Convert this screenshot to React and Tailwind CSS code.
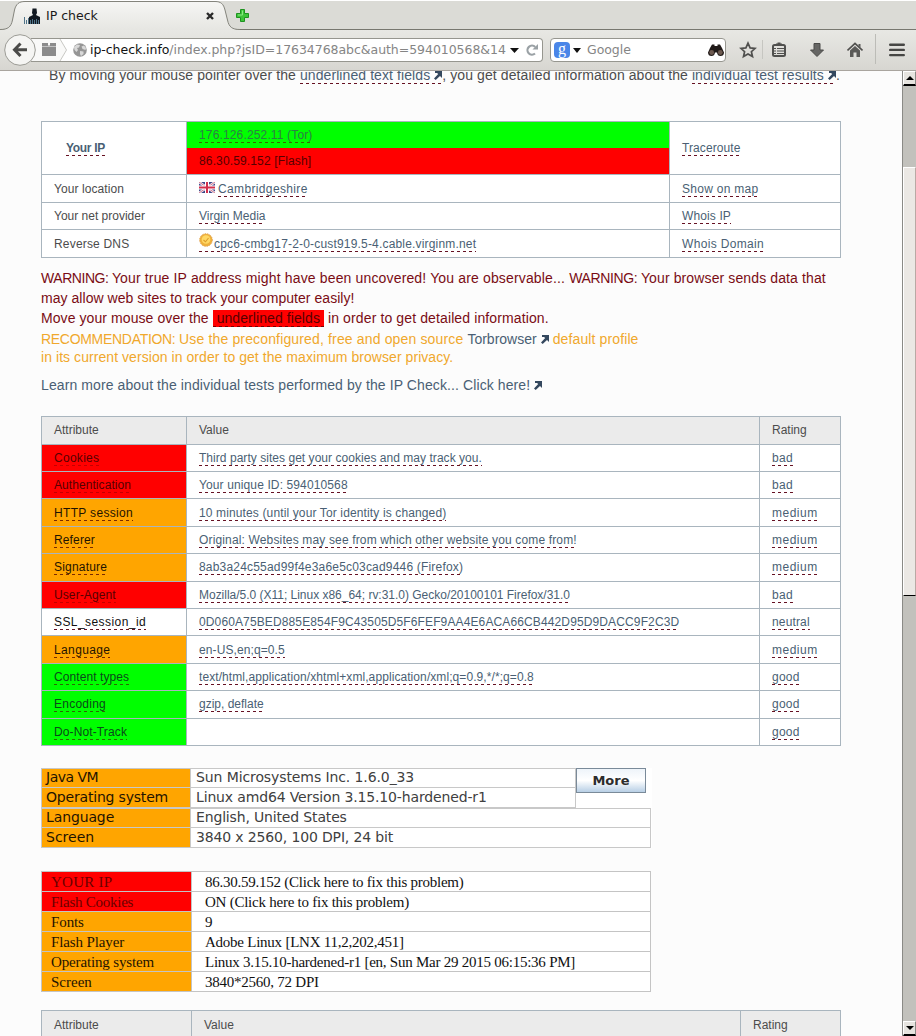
import React from "react";

const tones = {
  red: { cell: "bg-[#ff0000]", text: "text-[#560000] [--u:#c40000]" },
  orange: { cell: "bg-[#ffa500]", text: "text-[#1f1400] [--u:#7a2a00]" },
  green: { cell: "bg-[#00ff00]", text: "text-[#0a4a1a] [--u:#2a6a00]" },
  white: { cell: "bg-white", text: "text-[#111111] [--u:#661122]" },
};

const link = "text-[#4a5f74] [--u:#661122]";
const dashes =
  "bg-[repeating-linear-gradient(90deg,var(--u)_0_3px,transparent_3px_6px)] bg-[length:100%_1px] bg-bottom bg-no-repeat";

function U({ className = "", tone = link, lead = "leading-[14px]", children }) {
  return (
    <span className={`inline-block whitespace-nowrap pb-px ${dashes} ${lead} ${tone} ${className}`}>
      {children}
    </span>
  );
}

function Ext({ className = "" }) {
  return (
    <svg className={`inline-block align-baseline ${className}`} width="8" height="9" viewBox="0 0 8 9">
      <path d="M1 0H8V7L6 5L1.700 9L0 7.500L4.200 3L3 2H1Z" fill="#34485e" />
    </svg>
  );
}

const rows = [
  { a: "Cookies", at: "tracking-[0.28px]", v: "Third party sites get your cookies and may track you.", vt: "tracking-[0.04px]", r: "bad", t: "red", h: "h-[27px] pt-[6px]" },
  { a: "Authentication", at: "tracking-[0.07px]", v: "Your unique ID: 594010568", vt: "tracking-[0.12px]", r: "bad", t: "red", h: "h-[27px] pt-[6px]" },
  { a: "HTTP session", at: "tracking-[0.33px]", v: "10 minutes (until your Tor identity is changed)", vt: "tracking-[0.13px]", r: "medium", t: "orange", h: "h-[28px] pt-[7px]" },
  { a: "Referer", at: "tracking-[0.14px]", v: "Original: Websites may see from which other website you come from!", vt: "tracking-[0.15px]", r: "medium", t: "orange", h: "h-[27px] pt-[6px]" },
  { a: "Signature", at: "tracking-[0.2px]", v: "8ab3a24c55ad99f4e3a6e5c03cad9446 (Firefox)", vt: "tracking-[0.19px]", r: "medium", t: "orange", h: "h-[28px] pt-[6px]" },
  { a: "User-Agent", at: "tracking-[0.1px]", v: "Mozilla/5.0 (X11; Linux x86_64; rv:31.0) Gecko/20100101 Firefox/31.0", vt: "tracking-[-0.015px]", r: "bad", t: "red", h: "h-[27px] pt-[6px]" },
  { a: "SSL_session_id", at: "tracking-[0.43px]", v: "0D060A75BED885E854F9C43505D5F6FEF9AA4E6ACA66CB442D95D9DACC9F2C3D", vt: "tracking-[0.125px]", r: "neutral", t: "white", h: "h-[27px] pt-[6px]" },
  { a: "Language", at: "tracking-[0.37px]", v: "en-US,en;q=0.5", vt: "tracking-[0.1px]", r: "medium", t: "orange", h: "h-[28px] pt-[7px]" },
  { a: "Content types", at: "tracking-[0.08px]", v: "text/html,application/xhtml+xml,application/xml;q=0.9,*/*;q=0.8", vt: "tracking-[0.08px]", r: "good", t: "green", h: "h-[27px] pt-[6px]" },
  { a: "Encoding", at: "tracking-[0.25px]", v: "gzip, deflate", vt: "", r: "good", t: "green", h: "h-[28px] pt-[6px]" },
  { a: "Do-Not-Track", at: "tracking-[0.12px]", v: "", vt: "", r: "good", t: "green", h: "h-[27px] pt-[6px]" },
];

const ratingTracking = {
  bad: "tracking-[0.3px]",
  medium: "tracking-[0.5px]",
  neutral: "tracking-[0.15px]",
  good: "tracking-[0.25px]",
};

const alarm = "bg-[#ff0000] text-[#6a0000]";
const caution = "bg-[#ffa500] text-[#1f1400]";
const flash = [
  ["YOUR IP", "86.30.59.152 (Click here to fix this problem)", `${alarm} tracking-[0.25px]`],
  ["Flash Cookies", "ON (Click here to fix this problem)", `${alarm} tracking-[-0.25px]`],
  ["Fonts", "9", `${caution} tracking-[-0.1px]`],
  ["Flash Player", "Adobe Linux [LNX 11,2,202,451]", `${caution} tracking-[-0.12px]`],
  ["Operating system", "Linux 3.15.10-hardened-r1 [en, Sun Mar 29 2015 06:15:36 PM]", `${caution} tracking-[-0.15px]`],
  ["Screen", "3840*2560, 72 DPI", caution],
];

function TabStrip() {
  return (
    <div className="relative h-[30px] border-b border-[#77776f] border-t border-t-white bg-[#dbdbd6]">
      <svg className="absolute left-0 -top-px" width="240" height="30" viewBox="0 0 240 30">
        <defs>
          <linearGradient id="tab" x1="0" y1="0" x2="0" y2="1">
            <stop offset="0" stopColor="#f6f6f4" />
            <stop offset="1" stopColor="#e6e6e2" />
          </linearGradient>
        </defs>
        <path d="M0 29.5C8 29.5 11 27 12.500 20L14.500 10C16 4 19 1.500 25 1.500H215C221 1.500 223.500 4 225 10L227.500 20C229 27 232 29.500 240 29.500V30H0Z" fill="url(#tab)" />
        <path d="M0 29.5C8 29.5 11 27 12.500 20L14.500 10C16 4 19 1.500 25 1.500H215C221 1.500 223.500 4 225 10L227.500 20C229 27 232 29.500 240 29.500" fill="none" stroke="#84847c" />
      </svg>
      <div className="relative flex h-[29px] items-center pl-6">
        <svg width="16" height="16" viewBox="0 0 16 16">
          <path d="M8.500 0.500H12.500L13 5L12 7L16 9V16H5V9L9 7L8 5Z" fill="#111820" />
          <path d="M0.500 9V16M2.500 12V16M4.500 10V16M6.500 12V16M8.500 11V16M10.500 12V16M12.500 11V16M14.500 12V16" stroke="#4f7388" />
        </svg>
        <span className="ml-1.5 w-[160px] text-[12.5px] leading-4 text-[#1a1a1a]">IP check</span>
        <svg width="8" height="8" viewBox="0 0 8 8">
          <path d="M1 1L7 7M7 1L1 7" stroke="#2a2a2a" strokeWidth="2.400" />
        </svg>
        <svg className="ml-[21px]" width="15" height="15" viewBox="0 0 15 15">
          <path d="M5.500 1.500H9.500V5.500H13.500V9.500H9.500V13.500H5.500V9.500H1.500V5.500H5.500Z" fill="#3fc43a" stroke="#1e9320" strokeLinejoin="round" />
          <path d="M7.500 2.500V7H3" stroke="#8be884" fill="none" />
        </svg>
      </div>
    </div>
  );
}

function NavBar() {
  return (
    <div className="flex h-[41px] items-start border-b border-[#a9a59f] bg-gradient-to-b from-[#e8e8e4] to-[#d7d6d1]">
      <svg className="relative mt-1 ml-1 shrink-0" width="32" height="32" viewBox="0 0 32 32">
        <circle cx="16" cy="16" r="15.300" fill="#f5f5f3" stroke="#9b9b95" />
        <path d="M16.500 9.500L10.500 15.700L16.500 22M11 15.700H23" fill="none" stroke="#4b4b49" strokeWidth="3" />
      </svg>
      <div className="-ml-[5px] mt-2 flex h-6 w-[512px] shrink-0 items-center rounded-r-sm border border-l-0 border-[#96968f] bg-white">
        <svg className="-my-px shrink-0" width="40" height="24" viewBox="0 0 40 24">
          <path d="M0 1H29L35 12L29 23H0Q5 12 0 1Z" fill="#f9f9f8" />
          <path d="M29 1L35.500 12L29 23" fill="none" stroke="#c8c8c4" />
          <path d="M11 5H17V7.500H19V5H25V8H11ZM11 8.500H25V18H11Z" fill="#8b8b8b" />
        </svg>
        <svg className="ml-[2px] shrink-0" width="14" height="14" viewBox="0 0 14 14">
          <circle cx="7" cy="7" r="6.800" fill="#969696" />
          <path d="M1 4L4 1.500L7 2L6 4.500L4 5L5 7L3.500 9L1.500 7ZM8.500 3.500L11 2.500L13 5L12.500 7L9.500 6ZM7 8L10.500 8.500L10.500 11L8 13L7 11Z" fill="#d9d9d9" />
        </svg>
        <div className="ml-[3px] w-[417px] whitespace-nowrap text-[12.5px] leading-4 tracking-[-0.045px] text-[#858585]">
          <span className="text-[#111]">ip-check.info</span>/index.php?jsID=17634768abc&amp;auth=594010568&amp;14
        </div>
        <svg className="ml-[3px] shrink-0" width="9" height="5" viewBox="0 0 9 5"><path d="M0 0H9L4.500 5Z" fill="#111" /></svg>
        <svg className="ml-[7px] shrink-0" width="12" height="12" viewBox="0 0 12 12">
          <path d="M9 9.500A4.500 4.500 0 1 1 9.200 3" fill="none" stroke="#9aa1a5" strokeWidth="2.200" />
          <path d="M12 0V5.500H6.500Z" fill="#9aa1a5" />
        </svg>
      </div>
      <div className="ml-[7px] mt-2 flex h-6 w-[176px] shrink-0 items-center rounded-sm border border-[#96968f] bg-white pl-[3px]">
        <div className="flex size-4 items-center justify-center rounded-sm bg-[#4a86e8] pb-[3px] font-['Liberation_Serif',serif] text-[16px] leading-4 text-white">g</div>
        <svg className="ml-[3px]" width="8" height="5" viewBox="0 0 8 5"><path d="M0 0H8L4 5Z" fill="#111" /></svg>
        <span className="ml-[6px] w-[121px] text-[12.5px] leading-4 tracking-[-0.05px] text-[#858585]">Google</span>
        <svg width="16" height="12" viewBox="0 0 16 12">
          <path d="M4 0.500H6.500V2H9.500V0.500H12L14 4L16 8.500Q15.800 12 12.500 12Q9.500 12 9 8.500H7Q6.500 12 3.500 12Q0.200 12 0 8.500L2 4Z" fill="#201a18" />
          <circle cx="3.700" cy="8.500" r="2.400" fill="#6d5a50" />
          <circle cx="12.300" cy="8.500" r="2.400" fill="#6d5a50" />
        </svg>
      </div>
      <svg className="ml-[13px] mt-[11px] shrink-0" width="18" height="18" viewBox="0 0 18 18">
        <path d="M9 2.200L11.100 6.900L16 7.400L12.400 10.700L13.500 15.600L9 13L4.500 15.600L5.600 10.700L2 7.400L6.900 6.900Z" fill="none" stroke="#50504e" strokeWidth="1.700" />
      </svg>
      <div className="ml-[5px] mt-[10px] h-[19px] w-px bg-[#c6c6c1]" />
      <svg className="ml-2 mt-[12px] shrink-0" width="16" height="16" viewBox="0 0 16 16">
        <path d="M5 3V1.500H6.500V0.500H9.500V1.500H11V3" fill="#50504e" />
        <rect x="2" y="3" width="12" height="11" rx="1.500" fill="none" stroke="#50504e" strokeWidth="2" />
        <path d="M3 6.500H5M3 9H5M3 11.500H5M6 6.500H13M6 9H13M6 11.500H13" stroke="#50504e" strokeWidth="1.200" />
      </svg>
      <svg className="ml-[22px] mt-[13px] shrink-0" width="16" height="15" viewBox="0 0 16 15">
        <path d="M5 0.500H11V7H14.500L8 13.500L1.500 7H5Z" fill="#666664" stroke="#4a4a48" strokeLinejoin="round" />
      </svg>
      <svg className="ml-[22px] mt-[12px] shrink-0" width="16" height="16" viewBox="0 0 16 16">
        <path d="M0.500 8.500L8 1.500L15.500 8.500" fill="none" stroke="#50504e" strokeWidth="1.700" />
        <path d="M11.500 2H13.500V5.500L11.500 4ZM3 8.500L8 4L13 8.500V15H9.500V10.500H6.500V15H3Z" fill="#5a5a58" />
      </svg>
      <div className="ml-[12px] mt-[4px] h-[30px] w-px bg-[#bcbcb7]" />
      <svg className="ml-[13px] mt-[13px] shrink-0" width="16" height="14" viewBox="0 0 16 14">
        <path d="M1.200 1.700H14.800M1.200 6.900H14.800M1.200 12.100H14.800" stroke="#464644" strokeWidth="2.400" strokeLinecap="round" />
      </svg>
    </div>
  );
}

function SummaryTable() {
  const a = "w-[145px] shrink-0 border-r border-[#a9b5be] pl-3";
  const b = "w-[483px] shrink-0 border-r border-[#a9b5be] pl-3";
  return (
    <div className="mt-9 w-[800px] border border-[#a9b5be] bg-white text-[12px] leading-[14px] text-[#4c4c4c]">
      <div className="flex h-[53px] border-b border-[#a9b5be]">
        <div className="w-[145px] shrink-0 border-r border-[#a9b5be] pt-[19px] pl-6 font-bold"><U className="tracking-[-0.3px]">Your IP</U></div>
        <div className="w-[483px] shrink-0 border-r border-[#a9b5be]">
          <div className="h-[26px] bg-[#00ff00] pt-[6px] pl-3"><U tone="text-[#2c7f45] [--u:#3a6a00]" className="tracking-[0.15px]">176.126.252.11 (Tor)</U></div>
          <div className="h-[26px] bg-[#ff0000] pt-[6px] pl-3 tracking-[0.14px] text-[#560000]">86.30.59.152 [Flash]</div>
        </div>
        <div className="pt-[19px] pl-3"><U className="tracking-[0.1px]">Traceroute</U></div>
      </div>
      <div className="flex h-[28px] border-b border-[#a9b5be]">
        <div className={`${a} pt-[7px] tracking-[0.08px]`}>Your location</div>
        <div className={`${b} flex items-start pt-[7px]`}>
          <svg className="mr-[3px]" width="16" height="11" viewBox="0 0 16 11">
            <rect width="16" height="11" fill="#3d4587" />
            <path d="M0 0L16 11M16 0L0 11" stroke="#f2eef5" strokeWidth="2.400" />
            <path d="M0 0L16 11M16 0L0 11" stroke="#cc5870" strokeWidth="0.800" />
            <path d="M8 0V11M0 5.500H16" stroke="#fff" strokeWidth="4" />
            <path d="M8 0V11M0 5.500H16" stroke="#d22f4c" strokeWidth="2" />
          </svg>
          <U className="tracking-[0.36px]">Cambridgeshire</U>
        </div>
        <div className="pt-[7px] pl-3"><U className="tracking-[0.27px]">Show on map</U></div>
      </div>
      <div className="flex h-[27px] border-b border-[#a9b5be]">
        <div className={`${a} pt-[6px]`}>Your net provider</div>
        <div className={`${b} pt-[6px]`}><U>Virgin Media</U></div>
        <div className="pt-[6px] pl-3"><U className="tracking-[0.12px]">Whois IP</U></div>
      </div>
      <div className="flex h-[27px]">
        <div className={`${a} pt-[7px] tracking-[0.18px]`}>Reverse DNS</div>
        <div className={`${b} pt-[7px]`}>
          <div className={`flex h-[15px] w-fit tracking-[0.18px] ${link} ${dashes}`}>
            <svg className="-mt-[4px] mr-px" width="14" height="14" viewBox="0 0 14 14">
              <circle cx="7" cy="7" r="6.300" fill="#efb13c" />
              <circle cx="7" cy="7" r="6.300" fill="none" stroke="#e0a250" strokeDasharray="1.500 1" />
              <circle cx="7" cy="6.500" r="4.300" fill="#ffd865" />
              <path d="M4.500 7L6.500 8.800L9.500 5" fill="none" stroke="#dc9c2c" strokeWidth="1.100" />
            </svg>
            cpc6-cmbg17-2-0-cust919.5-4.cable.virginm.net
          </div>
        </div>
        <div className="pt-[7px] pl-3"><U className="tracking-[0.33px]">Whois Domain</U></div>
      </div>
    </div>
  );
}

function AttributeTable() {
  const a = "w-[145px] shrink-0 border-r border-[#a9b5be] pl-3";
  const b = "w-[573px] shrink-0 border-r border-[#a9b5be] pl-3";
  return (
    <div className="mt-[21px] w-[800px] border border-b-0 border-[#a9b5be] bg-white text-[12px] leading-[14px]">
      <div className="flex h-[28px] border-b border-[#a9b5be] bg-[#ebebeb] text-[#4c4c4c]">
        <div className={`${a} pt-[6px]`}>Attribute</div>
        <div className={`${b} pt-[6px]`}>Value</div>
        <div className="pt-[6px] pl-3">Rating</div>
      </div>
      {rows.map((r) => (
        <div key={r.a} className="flex border-b border-[#a9b5be]">
          <div className={`${a} ${tones[r.t].cell} ${r.h} -mb-px border-b`}><U tone={tones[r.t].text} className={r.at}>{r.a}</U></div>
          <div className={`${b} ${r.h} -mb-px border-b`}>{r.v && <U className={r.vt}>{r.v}</U>}</div>
          <div className={`${r.h} -mb-px pl-3`}><U className={ratingTracking[r.r]}>{r.r}</U></div>
        </div>
      ))}
    </div>
  );
}

function JavaPanel() {
  const k = "w-[149px] shrink-0 bg-[#ffa500] pl-1 text-[#1f1400] border-r border-[#c8c8c8]";
  const v = "whitespace-nowrap pl-[5px] text-[#404040]";
  return (
    <div className="mt-[22px] w-[611px] bg-white font-['DejaVu_Sans',sans-serif] text-[14px] leading-[17px]">
      <div className="flex">
        <div className="h-10 w-[535px] border border-[#c8c8c8]">
          <div className="flex h-[19px] border-b border-[#c8c8c8]"><div className={`${k} tracking-[-0.5px]`}>Java VM</div><div className={`${v} tracking-[-0.1px]`}>Sun Microsystems Inc. 1.6.0_33</div></div>
          <div className="flex h-[19px] leading-[19px]"><div className={`${k} tracking-[-0.19px]`}>Operating system</div><div className={`${v} tracking-[-0.15px]`}>Linux amd64 Version 3.15.10-hardened-r1</div></div>
        </div>
        <button className="h-[25px] w-[70px] border border-[#7a8a99] bg-gradient-to-b from-[#eef4fa] via-white to-[#b8cfe5] text-[13px] font-bold leading-[22px] text-[#2c2c2c]">More</button>
      </div>
      <div className="h-10 w-[610px] border border-[#c8c8c8]">
        <div className="flex h-[19px] border-b border-[#c8c8c8]"><div className={`${k} tracking-[-0.12px]`}>Language</div><div className={`${v} tracking-[-0.16px]`}>English, United States</div></div>
        <div className="flex h-[19px] leading-[19px]"><div className={k}>Screen</div><div className={`${v} tracking-[-0.15px]`}>3840 x 2560, 100 DPI, 24 bit</div></div>
      </div>
    </div>
  );
}

function FlashPanel() {
  return (
    <div className="mt-[23px] w-[610px] border border-b-0 border-[#c4c4c4] bg-white font-['Liberation_Serif',serif] text-[15px] leading-5">
      {flash.map(([k, v, c]) => (
        <div key={k} className="flex h-5 border-b border-[#c4c4c4]">
          <div className={`w-[150px] shrink-0 border-r border-[#c4c4c4] pl-[9px] ${c}`}>{k}</div>
          <div className="whitespace-nowrap pl-[13px] tracking-[-0.245px] text-[#111]">{v}</div>
        </div>
      ))}
    </div>
  );
}

function ScrollBar() {
  const btn = "flex h-[15px] shrink-0 items-center justify-center border border-t-white border-l-white border-r-[#8a8a86] border-b-2 border-b-black bg-[#e6e4df]";
  return (
    <div className="flex w-[14px] shrink-0 flex-col border-l border-[#8a8a86] bg-[#c2c1bc]">
      <div className={btn}><svg width="8" height="4" viewBox="0 0 8 4"><path d="M0 4H8L4 0Z" fill="#000" /></svg></div>
      <div className="mt-[81px] h-[429px] border border-t-white border-l-white border-r-[#b9a9a4] border-b-black bg-[#ebe8e4]" />
      <div className="grow" />
      <div className={btn}><svg width="8" height="4" viewBox="0 0 8 4"><path d="M0 0H8L4 4Z" fill="#000" /></svg></div>
    </div>
  );
}

export default function App() {
  return (
    <div className="h-[1036px] w-[916px] overflow-hidden bg-[#fcfcfc] font-['DejaVu_Sans',sans-serif]">
      <TabStrip />
      <NavBar />
      <div className="flex h-[965px]">
        <div className="w-[902px] shrink-0 overflow-hidden pl-[41px] font-['Liberation_Sans',sans-serif] text-[14px] leading-5">
          <p className="-mt-1.5 h-5 whitespace-nowrap pl-2 tracking-[0.09px] text-[#4c4c4c]">
            By moving your mouse pointer over the <U lead="leading-[16px]">underlined text fields<Ext className="ml-1" /></U>, you get detailed information about the <U lead="leading-[16px]">individual test results<Ext className="ml-1" /></U>.
          </p>
          <SummaryTable />
          <p className="mt-2.5 whitespace-nowrap text-[#7a0c14]">
            <span className="tracking-[-0.45px]">WARNING: </span>
            <span className="tracking-[0.15px]">Your true IP address might have been uncovered! You are observable... </span>
            <span className="tracking-[-0.35px]">WARNING: </span>
            <span className="tracking-[0.12px]">Your browser sends data that</span>
            <br /><span className="tracking-[0.045px]">may allow web sites to track your computer easily!</span>
            <br /><span className="tracking-[0.08px]">Move your mouse over the <span className={`${dashes} bg-[#ff0000] px-1 pb-px text-[#560000] [--u:#7a0000]`}>underlined fields</span></span>
            <span className="tracking-[0.12px]"> in order to get detailed information.</span>
          </p>
          <p className="mt-0.5 whitespace-nowrap leading-[18px] text-[#f0a82c]">
            <span className="tracking-[-0.3px]">RECOMMENDATION: </span>
            <span className="tracking-[0.15px]">Use the preconfigured, free and open source </span>
            <span className="text-[#4a5f74]">Torbrowser<Ext className="ml-1" /></span>
            <span className="tracking-[0.12px]"> default profile</span>
            <br /><span className="tracking-[0.06px]">in its current version in order to get the maximum browser privacy.</span>
          </p>
          <p className="mt-[9px] whitespace-nowrap tracking-[0.1px] text-[#4a5f74]">
            Learn more about the individual tests performed by the IP Check... Click here!<Ext className="ml-1" />
          </p>
          <AttributeTable />
          <JavaPanel />
          <FlashPanel />
          <div className="mt-[18px] flex h-[28px] w-[800px] border border-[#a9b5be] bg-[#ebebeb] text-[12px] leading-[14px] text-[#4c4c4c]">
            <div className="w-[150px] shrink-0 border-r border-[#a9b5be] pt-[7px] pl-3">Attribute</div>
            <div className="w-[549px] shrink-0 border-r border-[#a9b5be] pt-[7px] pl-3">Value</div>
            <div className="pt-[7px] pl-3">Rating</div>
          </div>
        </div>
        <ScrollBar />
      </div>
    </div>
  );
}
